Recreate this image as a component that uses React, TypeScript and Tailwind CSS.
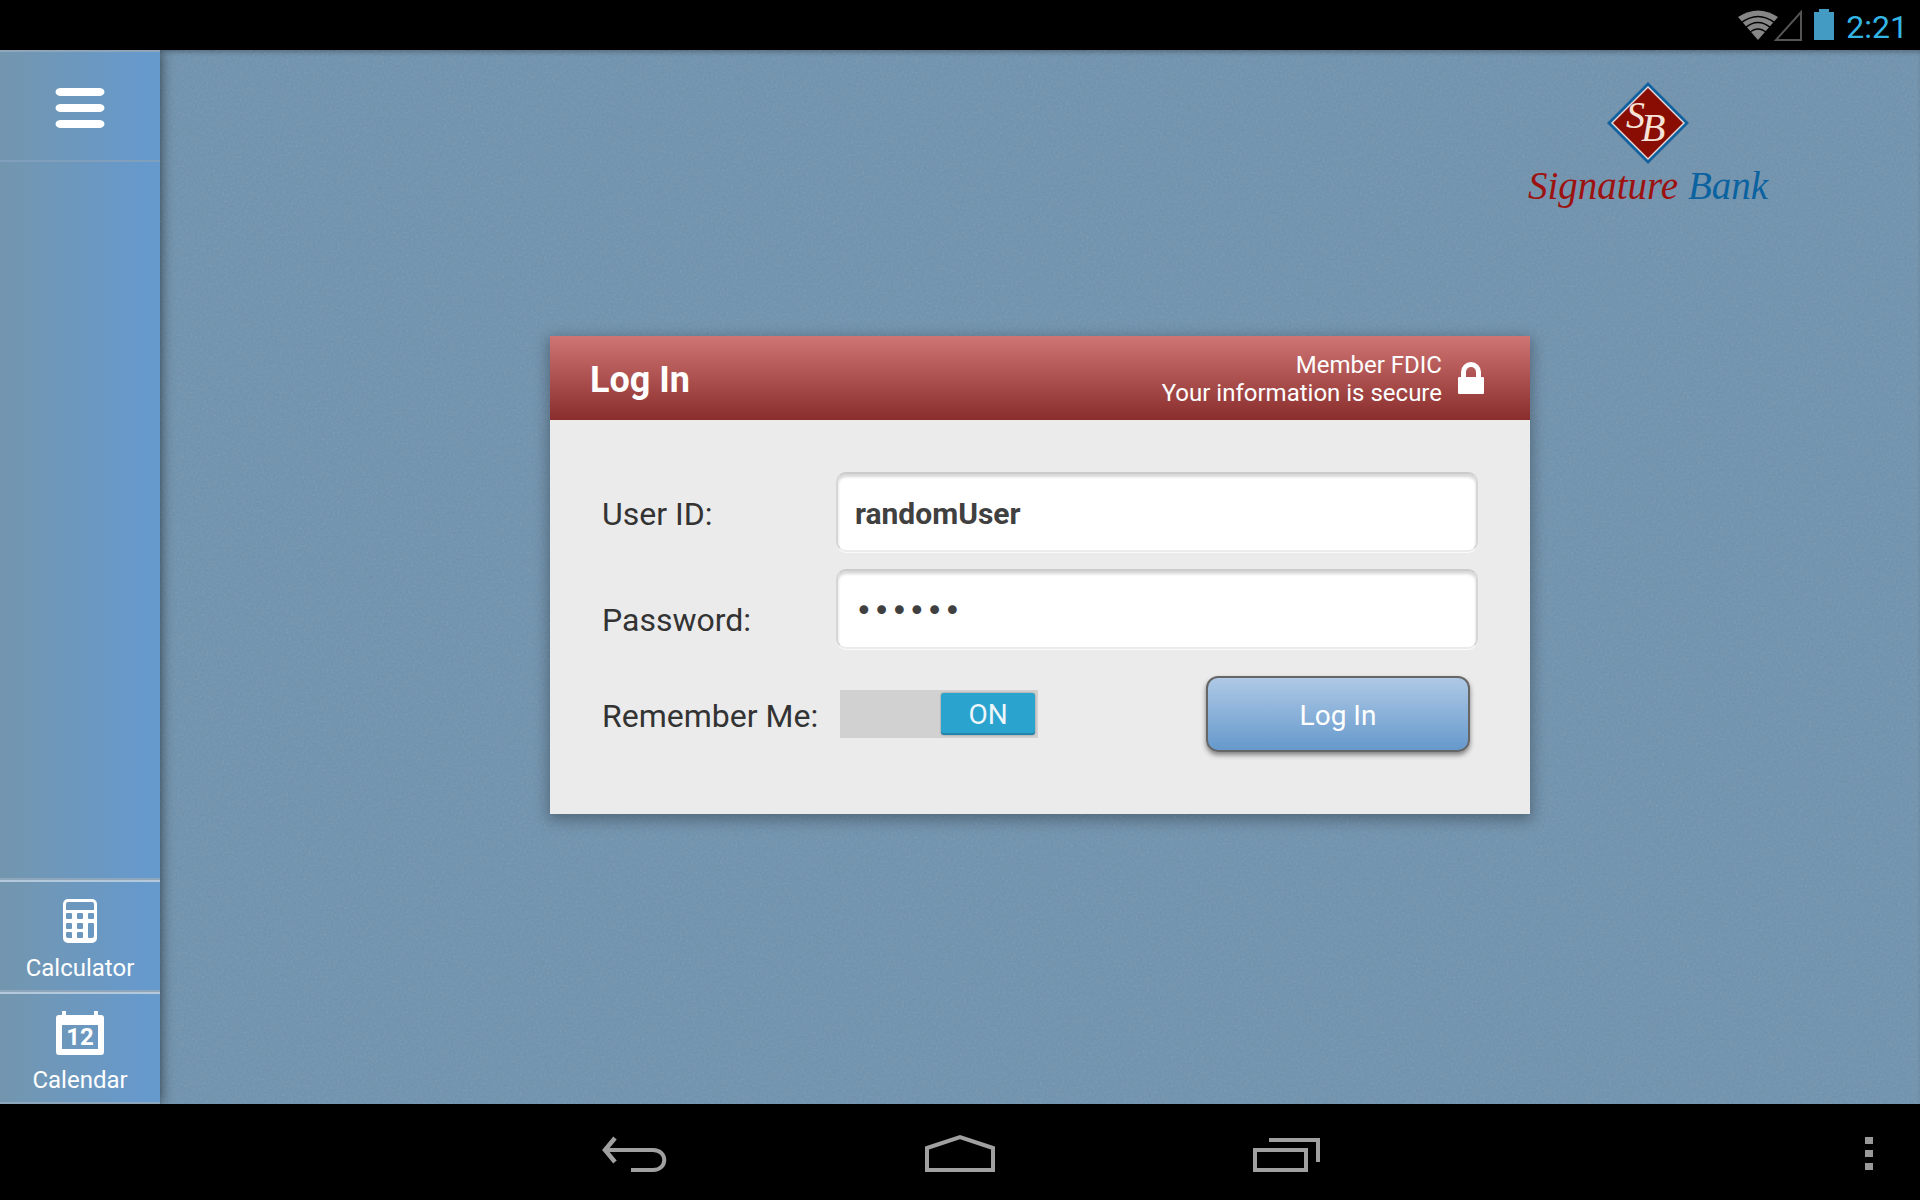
import { useState } from "react";

function StatusBar() {
  return (
    <header className="flex h-[50px] shrink-0 items-center justify-end bg-black pr-3">
      <svg className="h-8 w-10" viewBox="0 0 40 32" role="img" aria-label="Wi-Fi">
        <path d="M20 31 L0 8 Q20 -5 40 8 Z" fill="#868686" />
        <g fill="none" stroke="#000" strokeWidth="1.5">
          <path d="M3 14 Q20 1 37 14" />
          <path d="M7 19 Q20 8 33 19" />
          <path d="M11 24 Q20 16 29 24" />
        </g>
      </svg>
      <svg className="-ml-1 h-8 w-7" viewBox="0 0 28 32" role="img" aria-label="No signal">
        <path d="M27 3 V31 H2 Z" fill="none" stroke="#555" strokeWidth="2" />
      </svg>
      <svg className="ml-3 h-8 w-5" viewBox="0 0 20 32" role="img" aria-label="Battery">
        <path d="M5 0 H15 V3 H20 V31 H0 V3 H5 Z" fill="#439bc3" />
      </svg>
      <time className="ml-3 pt-1 text-[32px] leading-9 text-[#33b5e5]">2:21</time>
    </header>
  );
}

function CalculatorIcon() {
  return (
    <svg className="h-11 w-[34px]" viewBox="0 0 34 44" aria-hidden="true">
      <path
        fillRule="evenodd"
        fill="#fff"
        d="M5 0H29A5 5 0 0 1 34 5V39A5 5 0 0 1 29 44H5A5 5 0 0 1 0 39V5A5 5 0 0 1 5 0Z
           M5 3A2 2 0 0 0 3 5V11H31V5A2 2 0 0 0 29 3Z
           M4 14H8A1 1 0 0 1 9 15V19A1 1 0 0 1 8 20H4A1 1 0 0 1 3 19V15A1 1 0 0 1 4 14Z
           M15 14H19A1 1 0 0 1 20 15V19A1 1 0 0 1 19 20H15A1 1 0 0 1 14 19V15A1 1 0 0 1 15 14Z
           M26 14H30A1 1 0 0 1 31 15V19A1 1 0 0 1 30 20H26A1 1 0 0 1 25 19V15A1 1 0 0 1 26 14Z
           M4 24H8A1 1 0 0 1 9 25V29A1 1 0 0 1 8 30H4A1 1 0 0 1 3 29V25A1 1 0 0 1 4 24Z
           M15 24H19A1 1 0 0 1 20 25V29A1 1 0 0 1 19 30H15A1 1 0 0 1 14 29V25A1 1 0 0 1 15 24Z
           M4 33H8A1 1 0 0 1 9 34V39H5A2 2 0 0 1 3 37V34A1 1 0 0 1 4 33Z
           M15 33H19A1 1 0 0 1 20 34V38A1 1 0 0 1 19 39H15A1 1 0 0 1 14 38V34A1 1 0 0 1 15 33Z
           M26 24H30A1 1 0 0 1 31 25V37A2 2 0 0 1 29 39H26A1 1 0 0 1 25 38V25A1 1 0 0 1 26 24Z"
      />
    </svg>
  );
}

function CalendarIcon() {
  return (
    <svg className="h-11 w-12" viewBox="0 0 48 44" aria-hidden="true">
      <path
        fillRule="evenodd"
        fill="#fff"
        d="M6 0H10V4H38V0H42V4H45A3 3 0 0 1 48 7V41A3 3 0 0 1 45 44H3A3 3 0 0 1 0 41V7A3 3 0 0 1 3 4H6Z M6 14V38H42V14Z"
      />
      <text x="24" y="34" textAnchor="middle" fontFamily="Roboto, sans-serif" fontWeight="700" fontSize="24" fill="#fff">
        12
      </text>
    </svg>
  );
}

const sideItem =
  "flex h-28 w-full shrink-0 flex-col items-center border-t-2 border-b-2 border-t-[#b4c8dc] border-b-[#8da6bc] pt-[17px] text-2xl leading-7 text-white";

function Sidebar() {
  return (
    <nav className="z-10 flex w-40 shrink-0 flex-col bg-linear-to-r from-[#7396ae] to-[#6699cc] to-90% shadow-[2px_0_12px_rgba(0,0,0,0.45)]">
      <button
        type="button"
        aria-label="Menu"
        className="flex h-28 w-full shrink-0 items-start justify-center border-t-2 border-b-2 border-t-[#8fa5b9] border-b-[#7f9fbc] pt-9"
      >
        <svg className="h-10 w-[50px]" viewBox="0 0 50 40" aria-hidden="true">
          <g fill="#fff">
            <rect x="0.500" y="0" width="49" height="8" rx="5" ry="4" />
            <rect x="0.500" y="16" width="49" height="8" rx="5" ry="4" />
            <rect x="0.500" y="32" width="49" height="8" rx="5" ry="4" />
          </g>
        </svg>
      </button>
      <div className="flex-1 border-b-2 border-[#8da6bc]" />
      <button type="button" className={sideItem}>
        <CalculatorIcon />
        <span className="mt-[11px]">Calculator</span>
      </button>
      <button type="button" className={sideItem}>
        <CalendarIcon />
        <span className="mt-[11px]">Calendar</span>
      </button>
    </nav>
  );
}

function Logo() {
  return (
    <div className="mr-[152px] flex w-60 flex-col items-center self-end font-['Liberation_Serif',serif] italic">
      <svg className="size-[82px]" viewBox="0 0 82 82" role="img" aria-label="SB">
        <path d="M41 0 L82 41 L41 82 L0 41 Z" fill="#12619f" />
        <path d="M41 4 L78 41 L41 78 L4 41 Z" fill="#e6dcdc" />
        <path d="M41 6 L76 41 L41 76 L6 41 Z" fill="#8a0d04" />
        <text x="19" y="46" fontSize="38" fill="#f6e3d8">S</text>
        <text x="34" y="59" fontSize="40" fill="#f6e3d8">B</text>
      </svg>
      <p className="text-[39px] leading-[44px] whitespace-nowrap">
        <span className="text-[#9c1210]">Signature</span>
        <span className="text-[#0b62a0]"> Bank</span>
      </p>
    </div>
  );
}

const field =
  "h-20 w-full rounded-[10px] border-2 border-[#d6d6d6] border-t-[#cbcbcb] border-b-[#ebebeb] bg-white px-[17px] pt-[2px] text-3xl text-[#404040] shadow-[0_1px_0_0_#fbfbfb,inset_0_3px_3px_rgba(0,0,0,0.16)] outline-none";

function LoginCard() {
  const [user, setUser] = useState("randomUser");
  const [password, setPassword] = useState("secret");
  const [remember, setRemember] = useState(true);

  return (
    <section className="w-[980px] max-w-full self-center bg-[#ebebeb] shadow-[0_4px_14px_2px_rgba(0,0,0,0.3)]">
      <div className="flex h-[84px] items-center bg-linear-to-b from-[#cf7573] to-[#8a2d2d] pr-[46px] pl-10 text-white">
        <h1 className="flex-1 pt-1 text-4xl font-bold">Log In</h1>
        <p className="pt-[2px] text-right text-2xl leading-7">
          Member FDIC
          <br />
          Your information is secure
        </p>
        <svg className="ml-4 h-8 w-[26px]" viewBox="0 0 26 32" aria-hidden="true">
          <path d="M5.500 17 V10 A7.500 7.500 0 0 1 20.500 10 V17" fill="none" stroke="#fff" strokeWidth="5" />
          <rect y="15" width="26" height="17" rx="1" fill="#fff" />
        </svg>
      </div>
      <form
        className="grid grid-cols-[234px_1fr] items-center gap-y-[17px] px-[52px] pt-[52px] pb-[62px] text-[32px] leading-10 text-[#333]"
        onSubmit={(e) => e.preventDefault()}
      >
        <label htmlFor="user" className="pt-1">User ID:</label>
        <input
          id="user"
          className={field + " font-bold"}
          value={user}
          onChange={(e) => setUser(e.target.value)}
        />
        <label htmlFor="password" className="pt-[22px]">Password:</label>
        <input
          id="password"
          type="password"
          className={field + " font-['DejaVu_Sans',sans-serif]"}
          value={password}
          onChange={(e) => setPassword(e.target.value)}
        />
        <label htmlFor="remember" className="pt-[14px] whitespace-nowrap">Remember Me:</label>
        <div className="flex items-center justify-between pt-[10px] pr-2 pl-1">
          <label className="flex h-12 w-[198px] cursor-pointer bg-[#d1d1d1] p-[3px]">
            <input
              id="remember"
              type="checkbox"
              className="peer sr-only"
              checked={remember}
              onChange={(e) => setRemember(e.target.checked)}
            />
            <span className="flex w-[94px] items-center justify-center rounded-[3px] bg-[#999] pt-[2px] text-[28px] text-[#eef6fa] shadow-[inset_0_-2px_0_rgba(0,0,0,0.18),0_0_2px_rgba(0,0,0,0.4)] peer-checked:ml-auto peer-checked:bg-[#2aa3cf]">
              {remember ? "ON" : "OFF"}
            </span>
          </label>
          <button
            type="submit"
            className="h-[76px] w-[264px] rounded-xl border-2 border-[#666] bg-linear-to-b from-[#aec9e5] to-[#6699cc] pt-1 text-[28px] text-white shadow-[0_3px_5px_rgba(0,0,0,0.45)]"
          >
            Log In
          </button>
        </div>
      </form>
    </section>
  );
}

function PaperTexture() {
  return (
    <svg className="pointer-events-none absolute inset-0 size-full opacity-15" aria-hidden="true">
      <filter id="paper">
        <feTurbulence type="fractalNoise" baseFrequency="0.45" numOctaves="2" seed="4" stitchTiles="stitch" />
        <feColorMatrix type="saturate" values="0" />
      </filter>
      <rect width="100%" height="100%" filter="url(#paper)" />
    </svg>
  );
}

function NavBar() {
  return (
    <footer className="grid h-24 shrink-0 grid-cols-[1fr_auto_1fr] items-center bg-black">
      <div />
      <div className="flex pt-1">
        <button type="button" aria-label="Back" className="flex w-[326px] justify-center">
          <svg className="h-10 w-[66px]" viewBox="0 0 66 40" fill="none" stroke="#a0a0a0" strokeWidth="4">
            <path d="M14 4 L4 16 L14 28" strokeWidth="4.500" />
            <path d="M4 16 H52 C67 16 67 36 52 36 H30" />
          </svg>
        </button>
        <button type="button" aria-label="Home" className="flex w-[326px] justify-center">
          <svg className="h-10 w-[70px]" viewBox="0 0 70 40" fill="none" stroke="#a0a0a0" strokeWidth="4">
            <path d="M2 36 V14 L35 3 L68 14 V36 Z" />
          </svg>
        </button>
        <button type="button" aria-label="Recent apps" className="flex w-[326px] justify-center">
          <svg className="h-10 w-[68px]" viewBox="0 0 68 40" fill="none" stroke="#a0a0a0" strokeWidth="4">
            <path d="M3 16 H54 V36 H3 Z" />
            <path d="M17 6 H66 V28" />
          </svg>
        </button>
      </div>
      <button type="button" aria-label="More options" className="mr-[47px] justify-self-end pt-1">
        <svg className="h-[34px] w-2" viewBox="0 0 8 34" fill="#999">
          <rect width="8" height="7" />
          <rect y="13" width="8" height="7" />
          <rect y="26" width="8" height="7" />
        </svg>
      </button>
    </footer>
  );
}

export default function App() {
  return (
    <div className="flex min-h-screen flex-col bg-[#7395b0] font-[Roboto,sans-serif]">
      <StatusBar />
      <div className="flex flex-1">
        <Sidebar />
        <main className="relative flex flex-1 flex-col bg-[#6f92ae] shadow-[inset_0_4px_5px_-2px_rgba(0,0,0,0.3)]">
          <PaperTexture />
          <div className="relative flex flex-col gap-[128px] pt-8">
            <Logo />
            <LoginCard />
          </div>
        </main>
      </div>
      <NavBar />
    </div>
  );
}
